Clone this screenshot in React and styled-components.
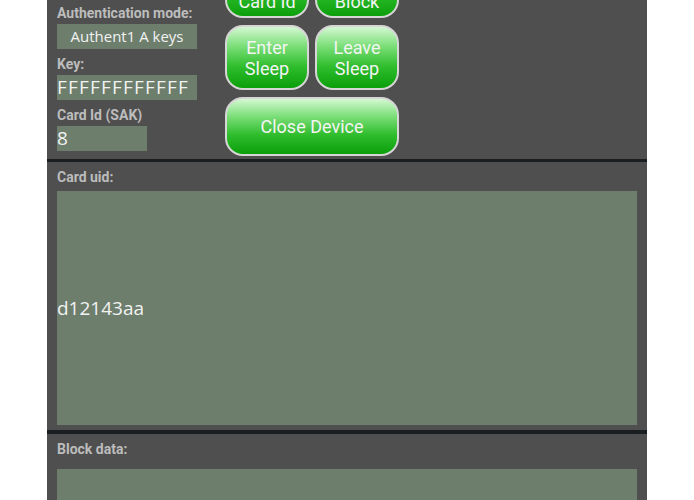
import styled, { createGlobalStyle } from "styled-components";

const GlobalStyle = createGlobalStyle`
  body {
    margin: 0;
    background: #ffffff;
    overflow: hidden;
  }
`;

export default function App() {
  return (
    <>
      <GlobalStyle />
      <Panel>
        <TopSection>
          <Fields>
            <Label>Authentication mode:</Label>
            <ValueBox width="140px" center size="15px">
              Authent1 A keys
            </ValueBox>
            <Label>Key:</Label>
            <ValueBox width="140px" spacing="1.2px">
              FFFFFFFFFFFF
            </ValueBox>
            <Label>Card Id (SAK)</Label>
            <ValueBox width="90px">8</ValueBox>
          </Fields>
          <Buttons>
            <GreenButton low>
              Get
              <br />
              Card Id
            </GreenButton>
            <GreenButton low>
              Read
              <br />
              Block
            </GreenButton>
            <GreenButton>
              Enter
              <br />
              Sleep
            </GreenButton>
            <GreenButton>
              Leave
              <br />
              Sleep
            </GreenButton>
            <GreenButton wide>Close Device</GreenButton>
          </Buttons>
        </TopSection>
        <Divider thickness="3px" />
        <Section>
          <SectionLabel gap="6px">Card uid:</SectionLabel>
          <DataBox height="234px">d12143aa</DataBox>
        </Section>
        <Divider thickness="4px" />
        <Section>
          <SectionLabel gap="12px">Block data:</SectionLabel>
          <DataBox height="120px"></DataBox>
        </Section>
      </Panel>
    </>
  );
}

const Panel = styled.div`
  width: 600px;
  margin-left: 47px;
  min-height: 600px;
  background: #4f4f4f;
  font-family: Roboto, "Liberation Sans", sans-serif;
`;

const TopSection = styled.div`
  display: flex;
  align-items: flex-end;
  gap: 28px;
  margin-top: -53px;
  padding: 0 10px 3px;
`;

const Fields = styled.div`
  display: flex;
  flex-direction: column;
  align-items: flex-start;
  padding-bottom: 5px;
`;

const Label = styled.div`
  font-size: 14px;
  line-height: 16px;
  font-weight: 700;
  color: #bcbcbc;
  margin-bottom: 3px;
`;

const ValueBox = styled.div`
  box-sizing: border-box;
  width: ${(p) => p.width};
  height: 25px;
  margin-bottom: 7px;
  background: #6d7e6d;
  color: #f2f2f2;
  font-family: "Open Sans", "DejaVu Sans", sans-serif;
  font-size: ${(p) => p.size || "19px"};
  letter-spacing: ${(p) => p.spacing || "normal"};
  line-height: 25px;
  text-align: ${(p) => (p.center ? "center" : "left")};
  white-space: nowrap;
  overflow: hidden;
  &:last-child {
    margin-bottom: 0;
  }
`;

const Buttons = styled.div`
  display: grid;
  grid-template-columns: 84px 84px;
  grid-template-rows: 71px 65px 59px;
  column-gap: 6px;
  row-gap: 7px;
`;

const GreenButton = styled.button`
  grid-column: ${(p) => (p.wide ? "1 / span 2" : "auto")};
  display: flex;
  flex-direction: column;
  align-items: center;
  justify-content: ${(p) => (p.low ? "flex-end" : "center")};
  box-sizing: border-box;
  border: 2px solid #d6d6d6;
  border-radius: 18px;
  background: linear-gradient(
    to bottom,
    #d4f8d2 0%,
    #7fe07c 30%,
    #2fbd2d 65%,
    #0b9f0b 100%
  );
  color: #f4f4f4;
  font-family: Roboto, "Liberation Sans", sans-serif;
  font-size: 18px;
  line-height: 21px;
  padding: ${(p) => (p.low ? "0 0 4px" : "0")};
  text-align: center;
`;

const Divider = styled.div`
  height: ${(p) => p.thickness};
  background: #1b1e21;
`;

const Section = styled.div`
  display: flex;
  flex-direction: column;
  padding: 7px 10px 5px;
`;

const SectionLabel = styled(Label)`
  margin-bottom: ${(p) => p.gap};
`;

const DataBox = styled.div`
  height: ${(p) => p.height};
  background: #6d7e6d;
  color: #f2f2f2;
  font-family: "Open Sans", "DejaVu Sans", sans-serif;
  font-size: 19px;
  display: flex;
  align-items: center;
`;
